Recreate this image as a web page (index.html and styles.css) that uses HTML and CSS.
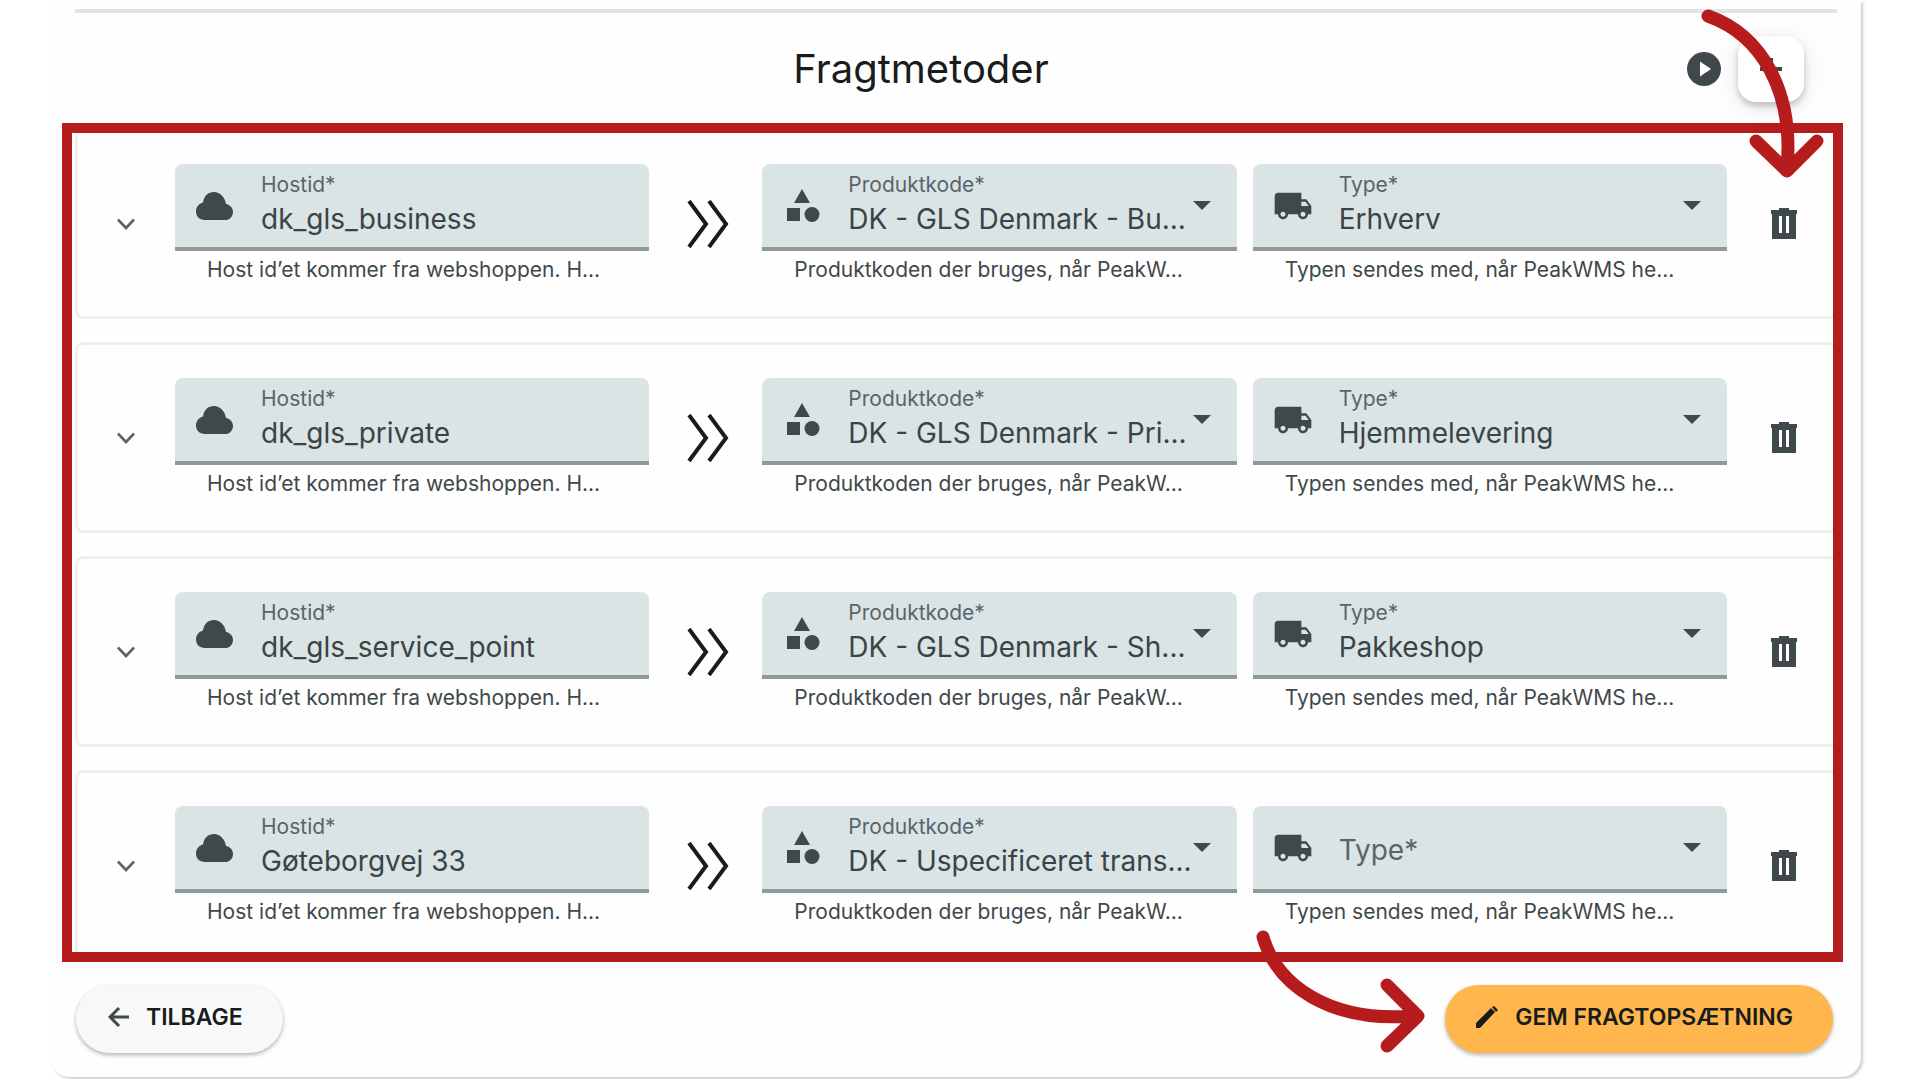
FILE: index.html
```
<!DOCTYPE html>
<html lang="da">
<head>
    <meta charset="UTF-8">
    <meta name="viewport" content="width=device-width, initial-scale=1.0">
    <title>Fragtmetoder</title>
    <link rel="stylesheet" href="styles.css">
</head>
<body>
    <svg class="sprite" aria-hidden="true">
        <symbol id="icon-chevron" viewBox="0 0 24 24"><path d="M7.2 8.400 12 13.400l4.800-5L18 9.600l-6 6.400-6-6.400z"/></symbol>
        <symbol id="icon-cloud" viewBox="0 0 40 34"><path d="M10 31C4 31 1 27 1 22.500 1 18 4 14.500 8 13.500 9 7 13 3 19 3s11 5 12 12c4 .5 7 4 7 8s-3 8-7 8z"/></symbol>
        <symbol id="icon-category" viewBox="0 0 40 34"><path d="M20 0 28 14H12zM5 19h13v13H5z"/><circle cx="30" cy="25.500" r="7.500"/></symbol>
        <symbol id="icon-truck" viewBox="0 0 24 24"><path d="M20 8h-3V4H3c-1.100 0-2 .9-2 2v11h2c0 1.660 1.340 3 3 3s3-1.340 3-3h6c0 1.660 1.340 3 3 3s3-1.340 3-3h2v-5l-3-4zM6 18.500c-.83 0-1.500-.67-1.500-1.500s.67-1.500 1.500-1.500 1.500.67 1.500 1.500-.67 1.500-1.500 1.500zm13.500-9 1.960 2.500H17V9.500h2.500zm-1.500 9c-.83 0-1.500-.67-1.500-1.500s.67-1.500 1.500-1.500 1.500.67 1.500 1.500-.67 1.500-1.500 1.500z"/></symbol>
        <symbol id="icon-trash" viewBox="0 0 26 32"><path fill-rule="evenodd" d="M8 0h10v2h8v4h-1v25H1V6H0V2h8zM8 8v17h3V8zM15 8v17h3V8z"/></symbol>
    </svg>

    <main class="panel">
        <header class="panel-header">
            <h1>Fragtmetoder</h1>
            <div class="header-actions">
                <button class="play-btn" type="button" aria-label="Afspil">
                    <svg viewBox="0 0 34 34"><circle cx="17" cy="17" r="17"/><path class="cutout" d="M13 9.500 24 17 13 24.500z"/></svg>
                </button>
                <button class="add-btn" type="button" aria-label="Tilføj">
                    <svg viewBox="0 0 24 24"><path d="M10 1h4v9h9v4h-9v9h-4v-9H1v-4h9z"/></svg>
                </button>
            </div>
        </header>

        <section class="methods">
            <div class="method-list" id="methodList">
                <!-- Rows are generated here -->
            </div>
            <div class="highlight"></div>
        </section>

        <footer class="panel-footer">
            <button class="btn back-btn" type="button">
                <svg viewBox="0 0 22 22"><path d="M11 2 2 11l9 9M2 11h19"/></svg>
                TILBAGE
            </button>
            <button class="btn save-btn" type="button">
                <svg viewBox="0 0 24 24"><path d="M1 23v-5L16 3l4 4L5 23zM17 2l2-1 4 4-2 2z"/></svg>
                GEM FRAGTOPSÆTNING
            </button>
        </footer>

        <svg class="arrow arrow-down" viewBox="0 0 125 172" aria-hidden="true"><path d="M8 8C62 27 94 84 87 160M56 133l31 30 30-30"/></svg>
        <svg class="arrow arrow-right" viewBox="0 0 170 125" aria-hidden="true"><path d="M8 8C22 56 74 94 160 87M132 56l31 31-31 30"/></svg>
    </main>

    <script>
        const methods = [
            { host: "dk_gls_business", product: "DK - GLS Denmark - Bu...", type: "Erhverv" },
            { host: "dk_gls_private", product: "DK - GLS Denmark - Pri...", type: "Hjemmelevering" },
            { host: "dk_gls_service_point", product: "DK - GLS Denmark - Sh...", type: "Pakkeshop" },
            { host: "Gøteborgvej 33", product: "DK - Uspecificeret trans...", type: "" }
        ];

        function icon(name) {
            return `<svg class="icon-${name}" aria-hidden="true"><use href="#icon-${name}"/></svg>`;
        }

        function selectField(id, name, label, value, hint) {
            const empty = value === "";
            return `
                <div class="field">
                    <div class="field-box ${empty ? "empty" : ""}">
                        ${icon(name)}
                        <div class="field-text">
                            <label for="${id}">${label}</label>
                            <select id="${id}"><option>${value}</option></select>
                        </div>
                        <span class="caret"></span>
                    </div>
                    <p class="hint">${hint}</p>
                </div>`;
        }

        document.getElementById("methodList").innerHTML = methods.map((m, i) => `
            <article class="method">
                <button class="expand-btn" type="button" aria-label="Vis detaljer">${icon("chevron")}</button>
                <div class="field">
                    <div class="field-box">
                        ${icon("cloud")}
                        <div class="field-text">
                            <label for="host${i}">Hostid*</label>
                            <input type="text" id="host${i}" value="${m.host}">
                        </div>
                    </div>
                    <p class="hint">Host id’et kommer fra webshoppen. H...</p>
                </div>
                <svg class="maps-to" viewBox="0 0 42 48" aria-hidden="true"><path d="M2 1 19 24 2 47M22 1l17 23-17 23"/></svg>
                ${selectField("product" + i, "category", "Produktkode*", m.product, "Produktkoden der bruges, når PeakW...")}
                ${selectField("type" + i, "truck", "Type*", m.type, "Typen sendes med, når PeakWMS he...")}
                <button class="delete-btn" type="button" aria-label="Slet">${icon("trash")}</button>
            </article>`).join("");
    </script>
</body>
</html>
```
FILE: styles.css
```
* {
    box-sizing: border-box;
}

body {
    margin: 0;
    background-color: #fff;
    color: #191c1c;
    font-family: Inter, Roboto, sans-serif;
}

button {
    padding: 0;
    border: none;
    background: none;
    color: inherit;
    font-family: inherit;
    cursor: pointer;
}

svg {
    display: block;
    fill: #3f484a;
}

.sprite {
    display: none;
}

.panel {
    position: relative;
    margin: 0 59px 2px 50px;
    padding: 9px 24px 24px 25px;
    border-radius: 0 0 20px 20px;
    background-color: #fefefe;
    box-shadow: 2px 2px 3px rgba(0, 0, 0, 0.2);
}

.panel-header {
    display: grid;
    grid-template-columns: 1fr auto 1fr;
    align-items: center;
    height: 119px;
    border-top: 4px solid #dfe5e4;
}

.panel-header h1 {
    grid-column: 2;
    margin: 0 70px 4px 0;
    font-size: 40px;
    font-weight: 400;
    line-height: 48px;
}

.header-actions {
    display: flex;
    align-items: center;
    justify-content: flex-end;
    gap: 17px;
    padding: 0 33px 4px 0;
}

.play-btn svg {
    width: 34px;
    height: 34px;
}

.cutout {
    fill: #fff;
}

.add-btn {
    display: flex;
    align-items: center;
    justify-content: center;
    width: 66px;
    height: 66px;
    border-radius: 18px;
    background-color: #fff;
    box-shadow: 0 4px 6px rgba(0, 0, 0, 0.2), 0 4px 24px rgba(0, 0, 0, 0.1);
}

.add-btn svg {
    width: 24px;
    height: 24px;
}

.methods {
    position: relative;
}

.method-list {
    display: grid;
    gap: 23px;
}

.method {
    display: flex;
    padding: 33px 0;
    border: 3px solid #efefef;
    border-radius: 8px;
}

.expand-btn,
.delete-btn {
    display: flex;
    align-items: center;
    justify-content: center;
    width: 97px;
    height: 119px;
}

.delete-btn {
    width: 107px;
}

.icon-chevron {
    width: 36px;
    height: 36px;
    margin-right: 2px;
    fill: #59646a;
}

.icon-trash {
    width: 26px;
    height: 32px;
    margin-left: 8px;
}

.maps-to {
    flex: none;
    width: 42px;
    height: 48px;
    margin: 36px 33px 0 38px;
    fill: none;
    stroke: #191c1c;
    stroke-width: 4px;
}

.field {
    flex: 1;
    min-width: 0;
}

.field + .field {
    margin-left: 16px;
}

.field-box {
    display: flex;
    align-items: center;
    height: 87px;
    padding: 0 20px;
    border-bottom: 4px solid #8f9998;
    border-radius: 8px 8px 0 0;
    background-color: #dae4e4;
}

.icon-cloud,
.icon-category,
.icon-truck {
    flex: none;
    width: 40px;
    height: 34px;
    margin-right: 26px;
}

.icon-truck {
    height: 40px;
}

.field-text {
    flex: 1;
    min-width: 0;
    padding-bottom: 2px;
}

.field-text label {
    display: block;
    color: #59646a;
    font-size: 21px;
    line-height: 28px;
}

.field-text input,
.field-text select {
    display: block;
    width: 100%;
    height: 40px;
    padding: 0;
    border: none;
    outline: none;
    background: none;
    appearance: none;
    color: #3a4347;
    font-family: inherit;
    font-size: 28px;
    line-height: 40px;
}

/* No value chosen: the label takes the value's place */
.empty .field-text {
    padding: 4px 0 0;
}

.empty label {
    font-size: 28px;
}

.empty select {
    height: 0;
}

.caret {
    margin-right: 6px;
    border: 9px solid transparent;
    border-top: 9px solid #3f484a;
    border-bottom: 0;
}

.hint {
    margin: 6px 32px 0;
    color: #3f484a;
    font-size: 21px;
    line-height: 26px;
    white-space: nowrap;
}

.highlight {
    position: absolute;
    inset: -5px -6px -1px -13px;
    border: 10px solid #b71c1c;
    pointer-events: none;
}

.panel-footer {
    display: flex;
    justify-content: space-between;
    padding: 24px 4px 0 1px;
}

.btn {
    display: flex;
    align-items: center;
    gap: 16px;
    height: 68px;
    padding: 0 40px 4px 32px;
    border-radius: 34px;
    font-size: 23px;
    font-weight: 600;
}

.back-btn {
    background-color: #f7f9f9;
    box-shadow: 0 2px 4px rgba(0, 0, 0, 0.3);
}

.back-btn svg {
    width: 22px;
    height: 22px;
    fill: none;
    stroke: #3f484a;
    stroke-width: 3px;
}

.save-btn {
    padding-left: 30px;
    background-color: #ffb74d;
    box-shadow: 0 2px 4px rgba(0, 0, 0, 0.3);
}

.save-btn svg {
    width: 24px;
    height: 24px;
    fill: #191c1c;
}

.arrow {
    position: absolute;
    fill: none;
    stroke: #b71c1c;
    stroke-width: 13px;
    stroke-linecap: round;
    stroke-linejoin: round;
    pointer-events: none;
}

.arrow-down {
    top: 8px;
    right: 36px;
    width: 125px;
    height: 172px;
}

.arrow-right {
    right: 436px;
    bottom: 23px;
    width: 170px;
    height: 125px;
}
```
